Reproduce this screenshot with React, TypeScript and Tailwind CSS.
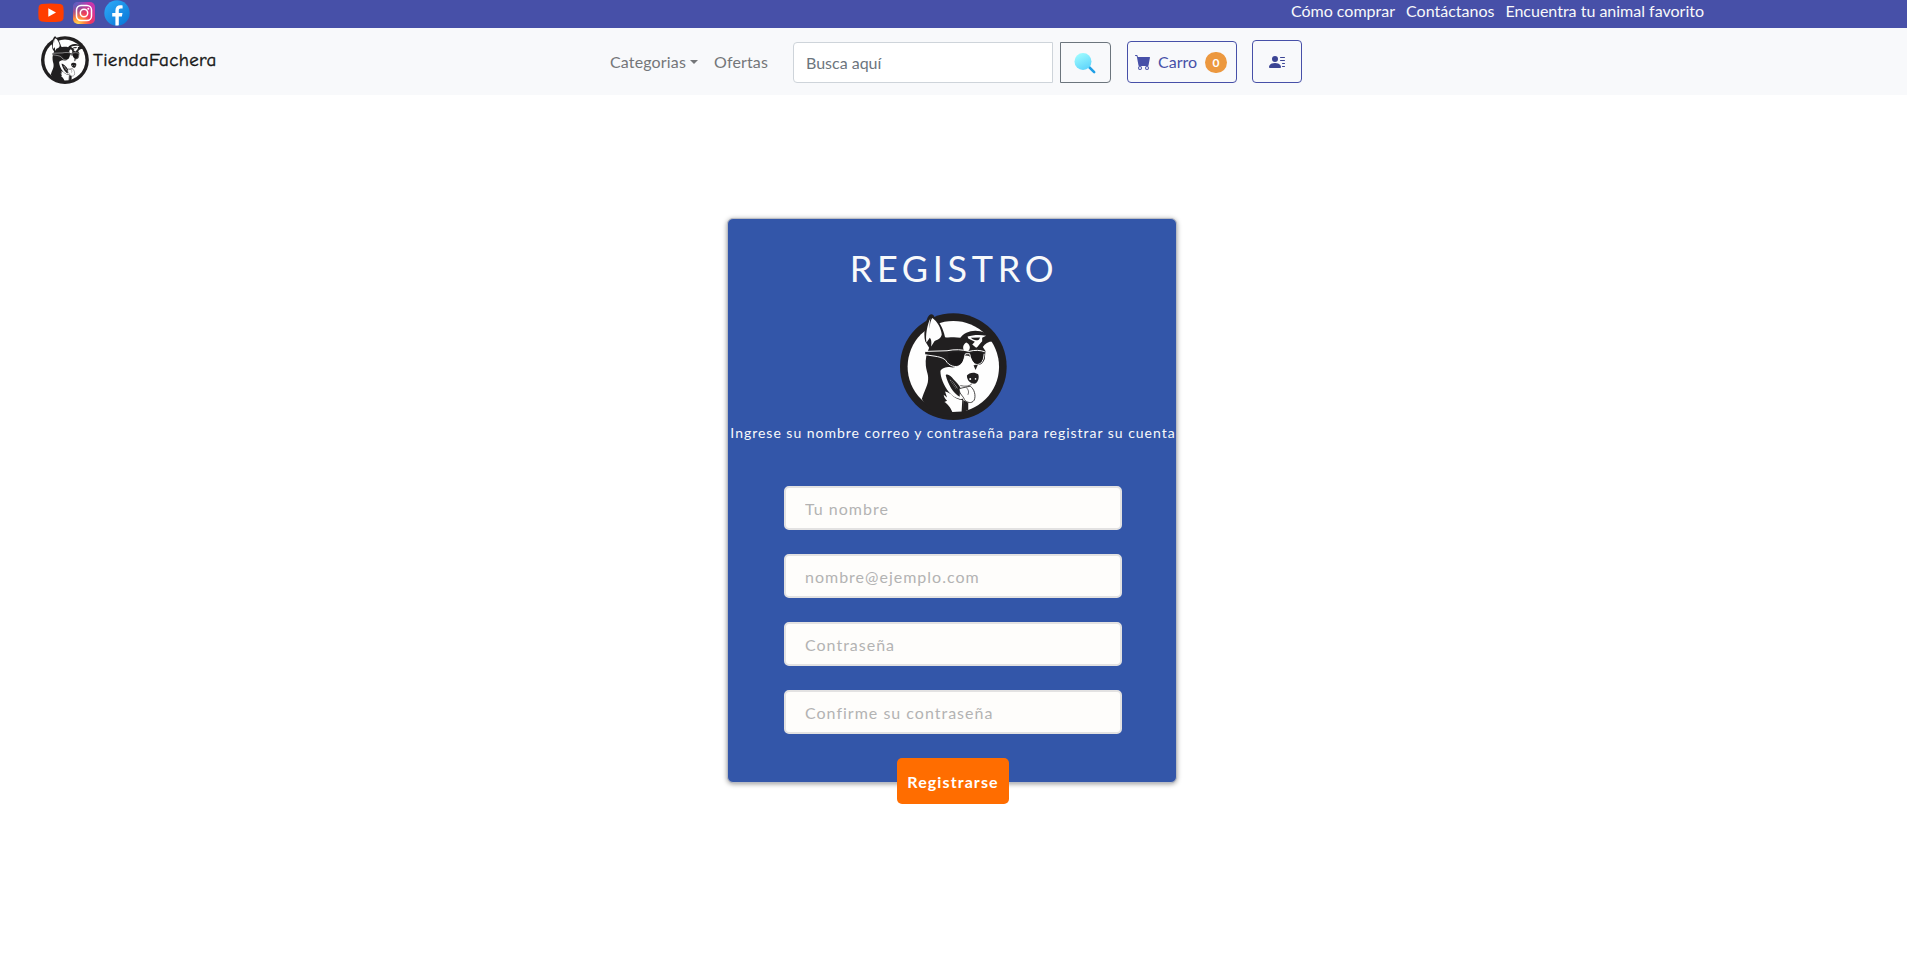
import React from "react";

function DogLogo({ className }: { className?: string }) {
  return (
    <svg viewBox="58 37 323 323" className={className} aria-label="TiendaFachera">
      <circle cx="219" cy="199" r="161" fill="#211f20" />
      <circle cx="219" cy="199" r="138" fill="#fefefe" />
      <path
        d="M124 296 C132 272 138 262 142 246 C146 224 138 216 136 196 C134 176 138 160 146 142 L134 122 C128 98 134 58 146 44 C153 38 160 42 162 50 C176 62 188 82 194 110 C206 112 222 108 240 112 C250 96 276 86 300 92 C316 96 326 102 338 108 L350 124 C330 120 316 126 308 140 L316 152 L314 176 C308 192 296 198 284 192 L276 176 C268 168 262 162 254 166 L246 186 C236 200 220 204 208 200 C196 200 184 204 180 212 C180 232 190 256 206 276 C220 292 236 298 248 296 C250 312 250 326 250 346 L180 346 C150 334 134 316 124 296 Z"
        fill="#211f20"
      />
      <path
        d="M156 52 C170 62 182 82 184 102 C182 114 172 118 162 122 L152 138 C154 124 152 116 148 112 L138 126 C134 106 140 72 150 52 C146 72 148 80 148 84 C148 72 150 58 156 52 Z"
        fill="#fefefe"
      />
      <path d="M262 108 C280 102 302 102 318 106 L306 112 L306 122 C298 130 294 138 288 142 L276 132 L284 124 L264 114 Z" fill="#fefefe" />
      <path d="M272 112 L300 111 L296 118 C286 122 278 118 272 112 Z" fill="#211f20" />
      <path d="M258 126 C270 132 272 144 264 152 L252 152 C246 142 248 132 258 126 Z" fill="#fefefe" />
      <path d="M134 153 L200 152 C224 147 246 147 266 154 C284 149 300 149 314 154 L311 166 L134 163 Z" fill="#211f20" />
      <path
        d="M134 153 L200 151 C224 146 246 147 266 153 C284 148 300 149 314 154 M134 163 C164 168 184 168 196 180 C206 198 224 202 240 196 C252 188 250 170 256 160 L268 160 C272 170 272 184 282 190 C296 196 310 190 312 160"
        fill="none"
        stroke="#fefefe"
        strokeWidth="3"
      />
      <path d="M204 160 C220 154 240 154 250 160 C252 176 246 192 230 194 C210 194 202 178 204 160 Z" fill="#1a1819" />
      <path d="M272 160 C284 154 298 154 309 159 C310 178 302 190 290 190 C276 186 272 174 272 160 Z" fill="#1a1819" />
      <path d="M280 195 L293 193 L286 209 Z" fill="#211f20" />
      <path
        d="M260 226 C266 216 284 214 294 222 C298 232 294 244 286 250 C274 252 260 244 260 226 Z"
        fill="#211f20"
      />
      <circle cx="270" cy="236" r="3" fill="#fefefe" />
      <circle cx="286" cy="236" r="2.500" fill="#fefefe" />
      <path
        d="M196 224 C204 220 212 228 220 238 C228 246 236 254 240 262 L238 290 C220 280 202 252 196 224 Z"
        fill="#211f20"
      />
      <path d="M208 238 L216 242 L232 264 L228 267 Z" fill="#fefefe" />
      <path d="M212 240 L231 268" stroke="#211f20" strokeWidth="4" />
      <path
        d="M236 266 C248 262 262 260 270 258 C282 266 288 286 282 300 C274 312 260 308 252 298 C250 288 238 284 236 266 Z"
        fill="#fefefe"
        stroke="#211f20"
        strokeWidth="2.500"
      />
      <path d="M258 262 C266 270 266 276 263 284 M240 256 C256 260 268 258 276 250" stroke="#211f20" strokeWidth="2" fill="none" />
      <path
        d="M194 274 C202 276 208 280 212 282 C220 292 234 298 246 300 L244 334 L216 336 C210 322 200 310 192 306 L200 302 C194 296 190 290 190 284 L200 292 Z"
        fill="#fefefe"
      />
      <path d="M249 300 L264 308 L264 330 L248 336 Z" fill="#211f20" />
    </svg>
  );
}

function YoutubeIcon() {
  return (
    <svg viewBox="0 0 26 20" className="h-[20px] w-[26px]">
      <path d="M3.500 1 Q13 0 22.500 1 Q25 1.300 25.400 4 Q26 10 25.400 15.500 Q25 18 22.500 18.400 Q13 19.400 3.500 18.400 Q1 18 .6 15.500 Q0 10 .6 4 Q1 1.300 3.500 1Z" fill="#ff3d00" />
      <path d="M10.300 5.300 18 9.500l-7.700 4.200z" fill="#fff" />
    </svg>
  );
}

function InstagramIcon() {
  return (
    <svg viewBox="0 0 24 24" className="h-[24px] w-[24px]">
      <defs>
        <radialGradient id="ig-warm" cx="0.2" cy="1" r="1">
          <stop offset="0" stopColor="#ffdd55" />
          <stop offset="0.3" stopColor="#ff8a3c" />
          <stop offset="0.6" stopColor="#f0385b" />
          <stop offset="1" stopColor="#c837ab" />
        </radialGradient>
        <radialGradient id="ig-cool" cx="0" cy="0" r="0.75">
          <stop offset="0" stopColor="#4168c9" />
          <stop offset="1" stopColor="#4168c9" stopOpacity="0" />
        </radialGradient>
      </defs>
      <rect x="1" y="1" width="22" height="22" rx="5" fill="url(#ig-warm)" />
      <rect x="1" y="1" width="22" height="22" rx="5" fill="url(#ig-cool)" />
      <g fill="none" stroke="#fff" strokeWidth="1.500">
        <rect x="4.500" y="4.500" width="15" height="15" rx="4.500" />
        <circle cx="12" cy="12" r="3.700" />
      </g>
      <circle cx="16.300" cy="7.700" r="1" fill="#fff" />
    </svg>
  );
}

function FacebookIcon() {
  return (
    <svg viewBox="0 0 26 26" className="h-[26px] w-[26px]">
      <defs>
        <linearGradient id="fb" x1="0.2" y1="0.1" x2="0.9" y2="0.9">
          <stop offset="0" stopColor="#2aa4f4" />
          <stop offset="1" stopColor="#0b7ad9" />
        </linearGradient>
      </defs>
      <circle cx="13" cy="13" r="12.700" fill="url(#fb)" />
      <path d="M11.400 25.400V16.500H8.200V13h3.200v-2.600c0-3.500 1.900-5.200 4.900-5.200 1 0 1.900.1 2.300.2v3.200h-1.900c-1.500 0-1.900.8-1.900 1.900V13h3.700l-.6 3.500h-3.100v8.800a12 12 0 0 1-3.400.1z" fill="#fff" />
    </svg>
  );
}

function SearchIcon() {
  return (
    <svg viewBox="0 0 22 22" className="mr-[1px] h-[22px] w-[22px]">
      <defs>
        <linearGradient id="lens" x1="0.2" y1="0" x2="0.7" y2="1">
          <stop offset="0" stopColor="#a0fdff" />
          <stop offset="1" stopColor="#5dd3fb" />
        </linearGradient>
      </defs>
      <path d="m14.500 14.500 5.700 5.700" stroke="#1f9fe6" strokeWidth="2.500" strokeLinecap="round" />
      <circle cx="9" cy="9.500" r="8.500" fill="url(#lens)" />
    </svg>
  );
}

function CartIcon() {
  return (
    <svg viewBox="0 0 16 16" fill="#4750a8" className="h-4 w-4">
      <path d="M0 1.500A.5.5 0 0 1 .5 1H2a.5.5 0 0 1 .485.379L2.890 3H14.500a.5.5 0 0 1 .491.592l-1.500 8A.5.5 0 0 1 13 12H4a.5.5 0 0 1-.491-.408L2.010 3.607 1.610 2H.5a.5.5 0 0 1-.5-.5zM5 12a2 2 0 1 0 0 4 2 2 0 0 0 0-4zm7 0a2 2 0 1 0 0 4 2 2 0 0 0 0-4zm-7 1a1 1 0 1 1 0 2 1 1 0 0 1 0-2zm7 0a1 1 0 1 1 0 2 1 1 0 0 1 0-2z" />
    </svg>
  );
}

function PersonLinesIcon() {
  return (
    <svg viewBox="0 0 16 16" fill="#3b4494" className="h-4 w-4">
      <path d="M6 8a3 3 0 1 0 0-6 3 3 0 0 0 0 6zm-5 6s-1 0-1-1 1-4 6-4 6 3 6 4-1 1-1 1H1zM11 3.500a.5.5 0 0 1 .5-.5h4a.5.5 0 0 1 0 1h-4a.5.5 0 0 1-.5-.5zm.5 2.500a.5.5 0 0 0 0 1h4a.5.5 0 0 0 0-1h-4zm2 3a.5.5 0 0 0 0 1h2a.5.5 0 0 0 0-1h-2zm0 3a.5.5 0 0 0 0 1h2a.5.5 0 0 0 0-1h-2z" />
    </svg>
  );
}

const fields = [
  { placeholder: "Tu nombre", type: "text" },
  { placeholder: "nombre@ejemplo.com", type: "email" },
  { placeholder: "Contraseña", type: "password" },
  { placeholder: "Confirme su contraseña", type: "password" },
];

export default function App() {
  return (
    <div className="h-[955px] overflow-hidden bg-white font-['Lato',sans-serif] text-base">
      <div className="flex h-7 items-start justify-between bg-[#4750a8] pr-[203px] pl-[38px]">
        <div className="flex h-[26px] items-center gap-[8px]">
          <YoutubeIcon />
          <InstagramIcon />
          <FacebookIcon />
        </div>
        <nav className="flex gap-[11px] leading-[21px] text-[#f8f9fa]">
          <a>Cómo comprar</a>
          <a>Contáctanos</a>
          <a>Encuentra tu animal favorito</a>
        </nav>
      </div>

      <header className="flex h-[67px] items-start bg-[#f8f9fb] pl-[41px]">
        <div className="flex w-[569px] items-center pt-[8px]">
          <DogLogo className="h-[48px] w-[48px] shrink-0" />
          <span className="ml-[4px] font-['Comic_Sans_MS','Comic_Neue','Noto_Sans',sans-serif] text-[19px] leading-[24px] tracking-[0.3px] text-[#151515] [-webkit-text-stroke:0.4px_#151515]">
            TiendaFachera
          </span>
        </div>
        <div className="flex w-[183px] items-center pt-[22px] leading-6 tracking-[0.150px] text-[#747679]">
          <span>Categorias</span>
          <span className="ml-[4px] border-x-[4.500px] border-t-[4.500px] border-x-transparent border-t-[#747679]" />
          <span className="ml-[16px]">Ofertas</span>
        </div>
        <input
          placeholder="Busca aquí"
          className="mt-[14px] h-[41px] w-[260px] rounded-l-[4px] border border-[#ced4da] bg-white pr-3 pl-3 outline-none placeholder:text-[#6c757d]"
        />
        <button className="mt-[14px] ml-[7px] flex h-[41px] w-[51px] items-center justify-center rounded-r-[4px] border border-[#6c757d] pt-[1px]">
          <SearchIcon />
        </button>
        <button className="mt-[13px] ml-[16px] flex h-[42px] w-[110px] items-center rounded-[4px] border border-[#4750a8] pl-[7px] text-[#4750a8]">
          <CartIcon />
          <span className="ml-[7px]">Carro</span>
          <span className="ml-[8px] flex h-[21px] w-[22px] items-center justify-center rounded-full bg-[#ec983f] pt-[1px] text-[12px] font-bold text-white">
            0
          </span>
        </button>
        <button className="mt-[12px] ml-[15px] flex h-[43px] w-[50px] items-center justify-center rounded-[4px] border border-[#4750a8]">
          <PersonLinesIcon />
        </button>
      </header>

      <main className="flex pt-[123px] pl-[727px]">
        <form className="flex h-[565px] w-[450px] flex-col items-center rounded-[6px] border border-[#b9bcc4] bg-[#3356a9] shadow-[0_1px_5px_0_rgba(0,0,0,0.4)]">
          <h1 className="mt-[27px] pl-[4px] text-[36px] leading-[44px] tracking-[4.700px] text-[#f8f9fa]">REGISTRO</h1>
          <DogLogo className="mt-[23px] ml-[3px] h-[107px] w-[107px] shrink-0" />
          <p className="mt-[2px] ml-[2px] text-[14px] leading-[22px] tracking-[0.980px] whitespace-nowrap text-[#f8f9fa]">
            Ingrese su nombre correo y contraseña para registrar su cuenta
          </p>
          <div className="mt-[42px] ml-[2px] flex flex-col gap-6">
            {fields.map((field) => (
              <input
                key={field.placeholder}
                type={field.type}
                placeholder={field.placeholder}
                className="h-[44px] w-[338px] rounded-[5px] border-2 border-[#e3e2e2] bg-[#fefdfb] pl-[19px] tracking-[1px] outline-none placeholder:text-[#b3b3b3]"
              />
            ))}
          </div>
          <button
            type="button"
            className="mt-6 ml-[2px] h-[46px] w-[112px] shrink-0 rounded-[5px] bg-[#ff6d00] pt-[2px] font-bold tracking-[1.100px] text-white"
          >
            Registrarse
          </button>
        </form>
      </main>
    </div>
  );
}
